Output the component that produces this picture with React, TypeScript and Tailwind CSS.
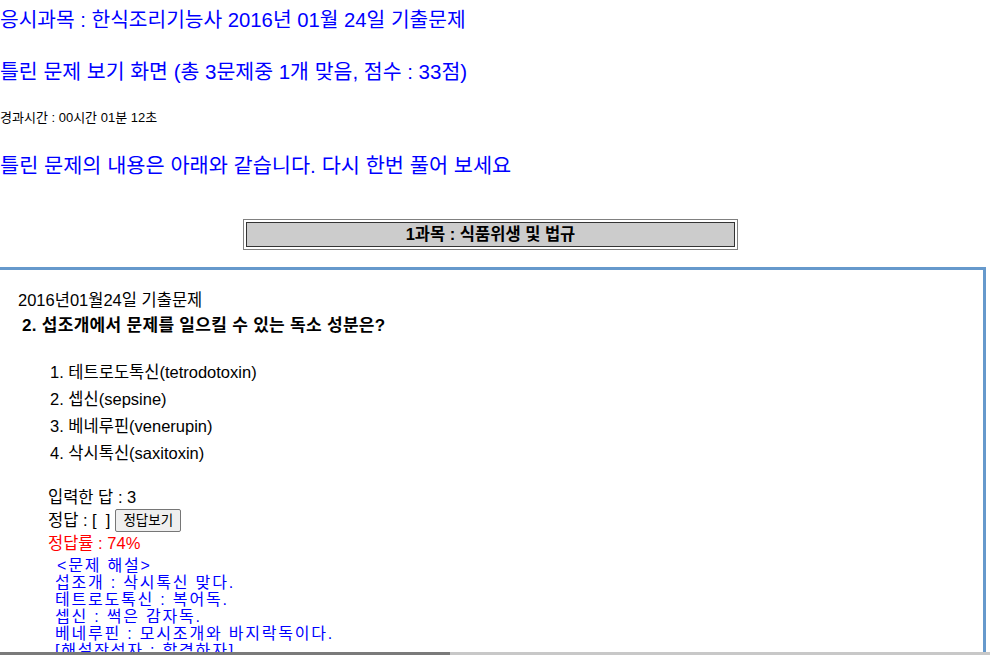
const KR = "font-['Liberation_Sans','Noto_Sans_CJK_KR',sans-serif]";

const OPTIONS = [
  "1. 테트로도톡신(tetrodotoxin)",
  "2. 셉신(sepsine)",
  "3. 베네루핀(venerupin)",
  "4. 삭시톡신(saxitoxin)",
];

const EXPLAIN = [
  "<문제 해설>",
  "섭조개 : 삭시톡신 맞다.",
  "테트로도톡신 : 복어독.",
  "셉신 : 썩은 감자독.",
  "베네루핀 : 모시조개와 바지락독이다.",
  "[해설작성자 : 합격하자]",
];

export default function App() {
  return (
    <div className={`relative h-[655px] w-[990px] overflow-hidden bg-white text-black ${KR}`}>
      <div className="mt-[6px] text-[20.3px] leading-[28px] text-[#0000ff]">
        응시과목 : 한식조리기능사 2016년 01월 24일 기출문제
      </div>
      <div className="mt-[24px] text-[20.5px] leading-[28px] text-[#0000ff]">
        틀린 문제 보기 화면 (총 3문제중 1개 맞음, 점수 : 33점)
      </div>
      <div className="mt-[23px] text-[13px] leading-[18px]">경과시간 : 00시간 01분 12초</div>
      <div className="mt-[25px] text-[20.8px] leading-[28px] text-[#0000ff]">
        틀린 문제의 내용은 아래와 같습니다. 다시 한번 풀어 보세요
      </div>

      <div className="ml-[243px] mt-[39px] w-[495px] border border-[#808080] p-[2px]">
        <div className="flex h-[25px] items-center justify-center border border-[#333] bg-[#cccccc] text-[16.5px] font-bold">
          1과목 : 식품위생 및 법규
        </div>
      </div>

      <div className="-ml-[3px] mt-[17px] h-[500px] w-[989px] border-[3px] border-[#6699cc] pl-[18px] pt-[20px]">
        <div className="text-[16.5px] leading-[20px]">2016년01월24일 기출문제</div>
        <div className="mt-[6px] pl-[4px] text-[17px] font-bold leading-[20px] tracking-[0.3px]">
          2. 섭조개에서 문제를 일으킬 수 있는 독소 성분은?
        </div>
        <div className="mt-[23px] pl-[32px]">
          {OPTIONS.map((o) => (
            <div key={o} className="text-[16.5px] leading-[27px]">
              {o}
            </div>
          ))}
        </div>
        <div className="mt-[19px] pl-[30px] text-[16.5px] leading-[23px]">
          <div>입력한 답 : 3</div>
          <div className="flex items-center">
            <span className="whitespace-pre">정답 : [  ]</span>
            <button
              type="button"
              className="ml-[5px] h-[23px] rounded-[2px] border border-[#767676] bg-[#efefef] px-[7px] text-[13.5px] leading-[20px]"
            >
              정답보기
            </button>
          </div>
          <div className="text-[#ff0000]">정답률 : 74%</div>
        </div>
        <div className="mt-[2px] pl-[37px] text-[16px] leading-[17px] tracking-[1.8px] text-[#0000ff]">
          {EXPLAIN.map((line, i) => (
            <div key={i} className={i === 0 ? "whitespace-pre pl-[2px]" : "whitespace-pre"}>
              {line}
            </div>
          ))}
        </div>
      </div>

      <div className="absolute bottom-0 left-0 flex h-[3px] w-full">
        <div className="w-[450px] bg-[#7a7a7a]" />
        <div className="flex-1 bg-[#c8c8c8]" />
      </div>
    </div>
  );
}
